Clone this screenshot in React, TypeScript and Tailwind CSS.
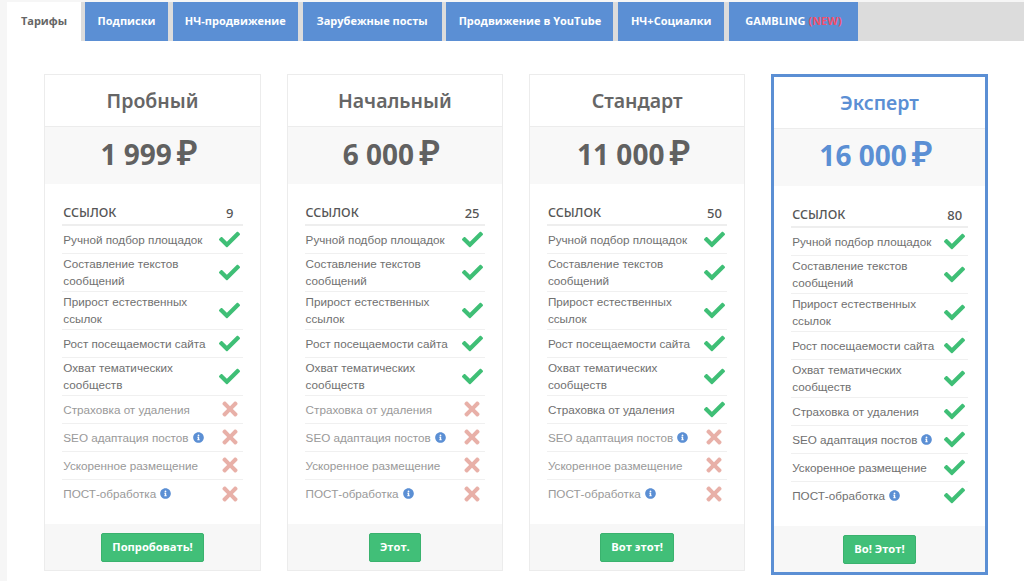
import React from "react";
import { FaCheck, FaTimes, FaInfoCircle } from "react-icons/fa";

const tabs = [
  { label: "Подписки", w: "w-[83px]" },
  { label: "НЧ-продвижение", w: "w-[125px]" },
  { label: "Зарубежные посты", w: "w-[139px]" },
  { label: "Продвижение в YouTube", w: "w-[167px]" },
  { label: "НЧ+Социалки", w: "w-[106px]" },
];

const features = [
  { text: ["Ручной подбор площадок"] },
  { text: ["Составление текстов", "сообщений"] },
  { text: ["Прирост естественных", "ссылок"] },
  { text: ["Рост посещаемости сайта"] },
  { text: ["Охват тематических", "сообществ"] },
  { text: ["Страховка от удаления"] },
  { text: ["SEO адаптация постов"], info: true },
  { text: ["Ускоренное размещение"] },
  { text: ["ПОСТ-обработка"], info: true },
];

const plans = [
  { name: "Пробный", price: "1 999", links: 9, enabled: 5, button: "Попробовать!" },
  { name: "Начальный", price: "6 000", links: 25, enabled: 5, button: "Этот." },
  { name: "Стандарт", price: "11 000", links: 50, enabled: 6, button: "Вот этот!" },
  { name: "Эксперт", price: "16 000", links: 80, enabled: 9, button: "Во! Этот!", featured: true },
];

type Plan = (typeof plans)[number];

const PlanCard = ({ plan }: { plan: Plan }) => {
  return (
    <div
      className={
        plan.featured
          ? "border-[3px] border-[#5b8fd4] bg-white"
          : "border border-[#ececec] bg-white"
      }
    >
      {/* Title */}
      <div
        className={
          plan.featured
            ? "h-[52px] flex items-center justify-center border-b border-[#ececec] font-['Noto_Sans'] text-[19.5px] font-semibold text-[#5b8fd4]"
            : "h-[52px] flex items-center justify-center border-b border-[#ececec] font-['Noto_Sans'] text-[19.5px] font-semibold text-[#666]"
        }
      >
        {plan.name}
      </div>

      {/* Price */}
      <div
        className={
          plan.featured
            ? "h-[57px] bg-[#f8f8f8] flex items-baseline pt-[4px] pr-[7px] justify-center gap-[5px] font-['Noto_Sans'] font-bold text-[#5b8fd4]"
            : "h-[57px] bg-[#f8f8f8] flex items-baseline pt-[5px] pr-[7px] justify-center gap-[5px] font-['Noto_Sans'] font-bold text-[#616161]"
        }
      >
        <span className="text-[28px] leading-[40px]">{plan.price}</span>
        <span className="text-[35px] leading-[40px] font-semibold">₽</span>
      </div>

      {/* Features */}
      <div className="px-[17px] pt-[16.5px] pb-[16.5px]">
        <div className="h-[25px] pt-[3px] flex items-center justify-between border-b-2 border-[#eeeeee] font-['Noto_Sans'] text-[12.5px] font-medium text-[#555] pl-[1px]">
          <span>ССЫЛОК</span>
          <span className="w-[22px] text-center text-[13px] mr-[2px]">{plan.links}</span>
        </div>
        {features.map((f, i) => {
          const on = i < plan.enabled;
          return (
            <div
              key={i}
              className={
                f.text.length > 1
                  ? "h-[38px] flex items-center justify-between border-b border-[#f0f0f0] last:border-b-0 pl-[1px]"
                  : "h-[28px] flex items-center justify-between border-b border-[#f0f0f0] last:border-b-0 pl-[1px]"
              }
            >
              <div
                className={
                  on
                    ? "font-['Liberation_Sans'] text-[11.7px] leading-[17px] text-[#707070]"
                    : "font-['Liberation_Sans'] text-[11.7px] leading-[17px] text-[#999]"
                }
              >
                {f.text.map((t) => (
                  <div key={t}>
                    {t}
                    {f.info && <FaInfoCircle className="inline-block ml-[4px] mb-[2px] text-[#5b8fd4] text-[11px]" />}
                  </div>
                ))}
              </div>
              <div className="w-[22px] mr-[2px] flex justify-center shrink-0">
                {on ? (
                  <FaCheck className="text-[#3fbf76] text-[21px]" />
                ) : (
                  <FaTimes className="text-[#e8b0a8] text-[22px]" />
                )}
              </div>
            </div>
          );
        })}
      </div>

      {/* Button */}
      <div className="h-[46px] bg-[#f7f7f7] flex items-center justify-center">
        <button className="h-[29px] px-[10px] rounded-[2px] bg-[#41bf78] border border-[#3ab26e] font-['Open_Sans'] text-[11.2px] font-bold text-white">
          {plan.button}
        </button>
      </div>
    </div>
  );
};

const App = () => {
  return (
    <div className="h-[581px] overflow-hidden bg-[#f6f6f6] pl-[7px] pt-[2px]">
      <div className="h-full bg-white">
        {/* Tabs */}
        <div className="h-[39px] flex bg-[#dcdcdc] font-['Open_Sans'] text-[11px] font-bold text-white">
          <div className="w-[74px] mr-[4px] bg-white text-[#666] flex items-center justify-center">Тарифы</div>
          {tabs.map((t) => (
            <div key={t.label} className={`${t.w} mr-[4.8px] bg-[#5b8fd4] flex items-center justify-center`}>
              {t.label}
            </div>
          ))}
          <div className="w-[129px] bg-[#5b8fd4] flex items-center justify-center gap-[3px]">
            GAMBLING <span className="text-[#f2506a]">(NEW)</span>
          </div>
        </div>

        {/* Plans */}
        <div className="grid grid-cols-4 gap-[25.8px] items-start w-[943.4px] ml-[37.3px] mt-[33px]">
          {plans.map((p) => (
            <PlanCard key={p.name} plan={p} />
          ))}
        </div>
      </div>
    </div>
  );
};

export default App;
